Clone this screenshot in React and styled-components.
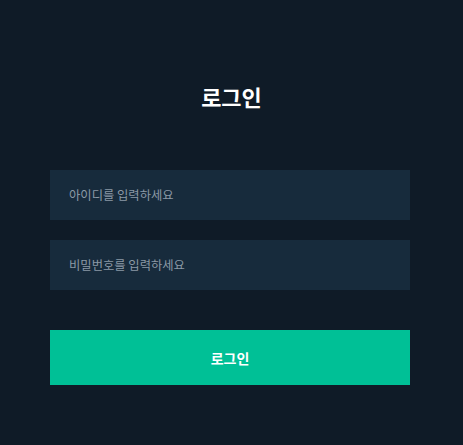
import React from "react";
import styled, { createGlobalStyle } from "styled-components";

const Global = createGlobalStyle`
  html, body { margin: 0; padding: 0; background: #0f1b27; }
  body { font-family: "Noto Sans CJK KR", "Noto Sans", sans-serif; }
`;

const Page = styled.div`
  min-height: 445px;
  padding: 0 50px;
  box-sizing: border-box;
  background: #0f1b27;
  display: flex;
  flex-direction: column;
`;

const Title = styled.h1`
  margin: 80px 0 58px;
  font-size: 22px;
  line-height: 32px;
  font-weight: 700;
  color: #ffffff;
  text-align: center;
`;

const Form = styled.form`
  width: 360px;
  display: flex;
  flex-direction: column;
  gap: 20px;
`;

const Input = styled.input`
  height: 50px;
  box-sizing: border-box;
  border: none;
  outline: none;
  background: #172b3c;
  padding: 0 19px;
  font-family: "Noto Sans CJK KR", sans-serif;
  font-size: 12.3px;
  color: #fff;
  &::placeholder { color: #8b99a6; }
`;

const Button = styled.button`
  margin-top: 20px;
  height: 55px;
  border: none;
  background: #00c096;
  color: #ffffff;
  font-family: "Noto Sans CJK KR", sans-serif;
  font-size: 14px;
  font-weight: 700;
  cursor: pointer;
`;

export default function App() {
  return (
    <>
      <Global />
      <Page>
        <Title>로그인</Title>
        <Form onSubmit={(e) => e.preventDefault()}>
          <Input placeholder="아이디를 입력하세요" />
          <Input type="password" placeholder="비밀번호를 입력하세요" />
          <Button type="submit">로그인</Button>
        </Form>
      </Page>
    </>
  );
}
